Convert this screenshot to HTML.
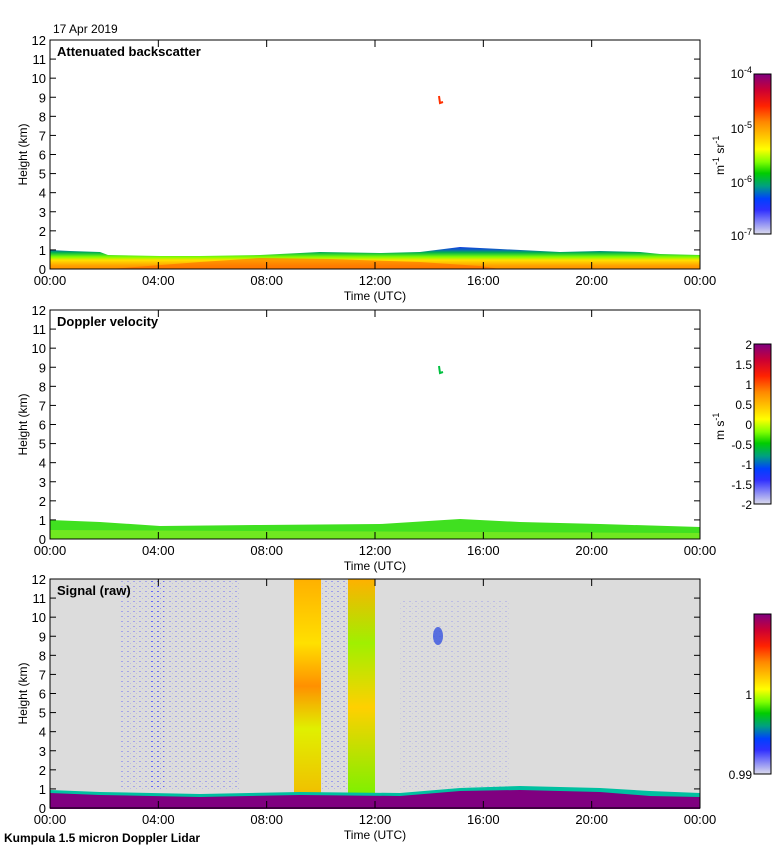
<!DOCTYPE html>
<html><head><meta charset="utf-8">
<style>
body{margin:0;background:#fff;width:780px;height:850px;overflow:hidden}
svg{display:block;font-family:"Liberation Sans",sans-serif}
</style></head><body>
<svg id="s" width="780" height="850" xmlns="http://www.w3.org/2000/svg">
<defs>
<linearGradient id="cb" x1="0" y1="0" x2="0" y2="1">
<stop offset="0" stop-color="#800080"/>
<stop offset="0.1" stop-color="#cc0033"/>
<stop offset="0.2" stop-color="#ff2200"/>
<stop offset="0.3" stop-color="#ff8800"/>
<stop offset="0.4" stop-color="#ffcc00"/>
<stop offset="0.47" stop-color="#ffff00"/>
<stop offset="0.55" stop-color="#80ff00"/>
<stop offset="0.62" stop-color="#00cc00"/>
<stop offset="0.7" stop-color="#00a080"/>
<stop offset="0.78" stop-color="#0040ff"/>
<stop offset="0.85" stop-color="#3030ff"/>
<stop offset="1" stop-color="#dcdcec"/>
</linearGradient>
<linearGradient id="bs" x1="0" y1="0" x2="0" y2="1">
<stop offset="0" stop-color="#1040e0"/>
<stop offset="0.12" stop-color="#1060c0"/>
<stop offset="0.25" stop-color="#00b050"/>
<stop offset="0.45" stop-color="#80ff00"/>
<stop offset="0.6" stop-color="#ffe000"/>
<stop offset="0.85" stop-color="#ffa000"/>
<stop offset="1" stop-color="#ff9000"/>
</linearGradient>
<linearGradient id="band" x1="0" y1="0" x2="0" y2="1">
<stop offset="0" stop-color="#ffb000"/>
<stop offset="0.3" stop-color="#ffe000"/>
<stop offset="0.5" stop-color="#ff9000"/>
<stop offset="0.7" stop-color="#e0f000"/>
<stop offset="1" stop-color="#f0c000"/>
</linearGradient>
<linearGradient id="band2" x1="0" y1="0" x2="0" y2="1">
<stop offset="0" stop-color="#ffb000"/>
<stop offset="0.3" stop-color="#a0f000"/>
<stop offset="0.6" stop-color="#ffd000"/>
<stop offset="1" stop-color="#80f000"/>
</linearGradient>
<pattern id="dots" width="6" height="5" patternUnits="userSpaceOnUse">
<rect x="1" y="1" width="2" height="1" fill="#4040ff"/>
<rect x="4" y="3" width="1" height="1" fill="#8080ff"/>
</pattern>
</defs>
<text x="53" y="33" font-size="12">17 Apr 2019</text>
<g id="p1">
<polygon points="50,250 70,251 100,252 108,255 160,256 200,256 260,255 320,252 380,253 420,252 460,247 500,249 560,252 600,251 640,252 660,254 700,255 700,269 50,269" fill="url(#bs)"/>
<polygon points="110,269 200,262 260,258 330,259 420,262 480,266 500,269" fill="#ff6000" opacity="0.55"/>
<path d="M439 96 L440 103 L443 102" stroke="#ff3000" stroke-width="2" fill="none"/>
</g>
<g id="p2">
<polygon points="50,520 100,522 160,526 260,525 380,524 460,519 520,522 600,524 700,527 700,539 50,539" fill="#40e020"/>
<polygon points="50,530 700,533 700,539 50,539" fill="#a0f020" opacity="0.5"/>
<path d="M439 366 L440 373 L443 372" stroke="#00c040" stroke-width="2" fill="none"/>
</g>
<g id="p3">
<rect x="50" y="579" width="650" height="230" fill="#dcdcdc"/>
<rect x="120" y="580" width="120" height="210" fill="url(#dots)" opacity="0.35"/>
<rect x="150" y="580" width="14" height="210" fill="url(#dots)" opacity="0.6"/>
<rect x="322" y="580" width="25" height="210" fill="url(#dots)" opacity="0.4"/>
<rect x="400" y="600" width="110" height="190" fill="url(#dots)" opacity="0.2"/>
<rect x="294" y="579" width="27" height="214" fill="url(#band)"/>
<rect x="348" y="579" width="27" height="214" fill="url(#band2)"/>
<ellipse cx="438" cy="636" rx="5" ry="9" fill="#2040e0" opacity="0.7"/>
<polygon points="50,790 100,792 200,794 300,792 400,793 460,788 520,786 600,788 650,791 700,793 700,809 50,809" fill="#00c0a0"/>
<polygon points="50,793 100,795 200,797 300,795 400,796 460,791 520,790 600,792 650,796 700,797 700,809 50,809" fill="#800080"/>
</g>
<rect x="754" y="74" width="17" height="160" fill="url(#cb)" stroke="#000"/>
<rect x="754" y="344" width="17" height="160" fill="url(#cb)" stroke="#000"/>
<rect x="754" y="614" width="17" height="160" fill="url(#cb)" stroke="#000"/>
<g font-size="12" text-anchor="end">
<text x="752" y="78">10<tspan font-size="9" dy="-5">-4</tspan></text>
<text x="752" y="133">10<tspan font-size="9" dy="-5">-5</tspan></text>
<text x="752" y="187">10<tspan font-size="9" dy="-5">-6</tspan></text>
<text x="752" y="240">10<tspan font-size="9" dy="-5">-7</tspan></text>
<text x="752" y="349">2</text><text x="752" y="369">1.5</text><text x="752" y="389">1</text>
<text x="752" y="409">0.5</text><text x="752" y="429">0</text><text x="752" y="449">-0.5</text>
<text x="752" y="469">-1</text><text x="752" y="489">-1.5</text><text x="752" y="509">-2</text>
<text x="752" y="699">1</text><text x="752" y="779">0.99</text>
</g>
<text font-size="12" transform="translate(724,175) rotate(-90)">m<tspan font-size="9" dy="-5">-1</tspan><tspan dy="5"> sr</tspan><tspan font-size="9" dy="-5">-1</tspan></text>
<text font-size="12" transform="translate(724,440) rotate(-90)">m s<tspan font-size="9" dy="-5">-1</tspan></text>
<text x="4" y="842" font-size="12" font-weight="bold">Kumpula 1.5 micron Doppler Lidar</text>
</svg>
<script>
var s=document.getElementById('s'),NS='http://www.w3.org/2000/svg';
function el(t,a,txt){var e=document.createElementNS(NS,t);for(var k in a)e.setAttribute(k,a[k]);if(txt!=null)e.textContent=txt;s.appendChild(e);return e;}
var tops=[40,310,579],titles=['Attenuated backscatter','Doppler velocity','Signal (raw)'];
var L=50,R=700,H=229;
tops.forEach(function(T,i){
 var B=T+H;
 el('rect',{x:L,y:T,width:R-L,height:H,fill:'none',stroke:'#000','stroke-width':1});
 for(var k=0;k<=12;k++){var y=B-k*H/12;
  el('line',{x1:L,y1:y,x2:L+6,y2:y,stroke:'#000'});
  el('line',{x1:R,y1:y,x2:R-6,y2:y,stroke:'#000'});
  el('text',{x:L-4,y:y+5,'font-size':13,'text-anchor':'end'},String(k));}
 var labs=['00:00','04:00','08:00','12:00','16:00','20:00','00:00'];
 for(var k=0;k<=6;k++){var x=L+k*(R-L)/6;
  el('line',{x1:x,y1:B,x2:x,y2:B-7,stroke:'#000'});
  el('line',{x1:x,y1:T,x2:x,y2:T+7,stroke:'#000'});
  el('text',{x:x,y:B+16,'font-size':13,'text-anchor':'middle'},labs[k]);}
 el('text',{x:375,y:B+31,'font-size':12,'text-anchor':'middle'},'Time (UTC)');
 el('text',{x:57,y:T+16,'font-size':13,'font-weight':'bold'},titles[i]);
 el('text',{'font-size':12,'text-anchor':'middle',transform:'translate(27,'+(T+H/2)+') rotate(-90)'},'Height (km)');
});
</script>
</body></html>
